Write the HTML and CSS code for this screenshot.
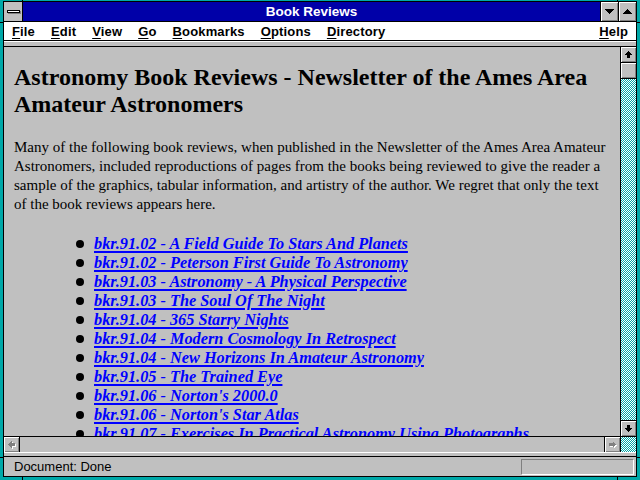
FILE: index.html
```html
<!DOCTYPE html>
<html>
<head>
<meta charset="utf-8">
<title>Book Reviews</title>
<link rel="stylesheet" href="styles.css">
</head>
<body>
<div class="window">
  <span class="notch nt1"></span><span class="notch nt2"></span>
  <span class="notch nb1"></span><span class="notch nb2"></span>
  <span class="notch nl1"></span><span class="notch nl2"></span>
  <span class="notch nr1"></span><span class="notch nr2"></span>
  <div class="inner">
    <div class="titlebar">
      <div class="sysbox"><span class="sysdash"></span></div>
      <div class="title">Book Reviews</div>
      <div class="tbtn">
        <svg width="9" height="6" viewBox="0 0 9 6" shape-rendering="crispEdges"><polygon points="0,0 9,0 4.5,5" fill="#000"/></svg>
      </div>
      <div class="tbtn last">
        <svg width="9" height="6" viewBox="0 0 9 6" shape-rendering="crispEdges"><polygon points="4.5,0 9,5 0,5" fill="#000"/></svg>
      </div>
    </div>
    <div class="menubar">
      <span class="mi"><u>F</u>ile</span>
      <span class="mi"><u>E</u>dit</span>
      <span class="mi"><u>V</u>iew</span>
      <span class="mi"><u>G</u>o</span>
      <span class="mi"><u>B</u>ookmarks</span>
      <span class="mi"><u>O</u>ptions</span>
      <span class="mi"><u>D</u>irectory</span>
      <span class="mi help"><u>H</u>elp</span>
    </div>
    <div class="sep"></div>
    <div class="main">
      <div class="content">
        <h1 class="head">Astronomy Book Reviews - Newsletter of the Ames Area Amateur Astronomers</h1>
        <p class="intro">Many of the following book reviews, when published in the Newsletter of the Ames Area Amateur Astronomers, included reproductions of pages from the books being reviewed to give the reader a sample of the graphics, tabular information, and artistry of the author. We regret that only the text of the book reviews appears here.</p>
        <ul class="links">
          <li><a href="#">bkr.91.02 - A Field Guide To Stars And Planets</a></li>
          <li><a href="#">bkr.91.02 - Peterson First Guide To Astronomy</a></li>
          <li><a href="#">bkr.91.03 - Astronomy - A Physical Perspective</a></li>
          <li><a href="#">bkr.91.03 - The Soul Of The Night</a></li>
          <li><a href="#">bkr.91.04 - 365 Starry Nights</a></li>
          <li><a href="#">bkr.91.04 - Modern Cosmology In Retrospect</a></li>
          <li><a href="#">bkr.91.04 - New Horizons In Amateur Astronomy</a></li>
          <li><a href="#">bkr.91.05 - The Trained Eye</a></li>
          <li><a href="#">bkr.91.06 - Norton's 2000.0</a></li>
          <li><a href="#">bkr.91.06 - Norton's Star Atlas</a></li>
          <li><a href="#">bkr.91.07 - Exercises In Practical Astronomy Using Photographs</a></li>
        </ul>
      </div>
      <div class="vscroll">
        <div class="sbtn vb">
          <svg width="9" height="9" viewBox="0 0 9 9" shape-rendering="crispEdges"><polygon points="4.5,1 8,5 6,5 6,8 3,8 3,5 1,5" fill="#000"/></svg>
        </div>
        <div class="thumb"></div>
        <div class="track"></div>
        <div class="sbtn vb down">
          <svg width="9" height="9" viewBox="0 0 9 9" shape-rendering="crispEdges"><polygon points="3,1 6,1 6,4 8,4 4.5,8 1,4 3,4" fill="#000"/></svg>
        </div>
      </div>
    </div>
    <div class="hscroll">
      <div class="sbtn hb">
        <svg width="11" height="9" viewBox="0 0 11 9" shape-rendering="crispEdges"><polygon points="2,4.5 5.5,1 5.5,3 9,3 9,6 5.5,6 5.5,8" fill="#fff" transform="translate(1,1)"/><polygon points="2,4.5 5.5,1 5.5,3 9,3 9,6 5.5,6 5.5,8" fill="#808080"/></svg>
      </div>
      <div class="htrack"></div>
      <div class="sbtn hb right">
        <svg width="11" height="9" viewBox="0 0 11 9" shape-rendering="crispEdges"><polygon points="9,4.5 5.5,1 5.5,3 2,3 2,6 5.5,6 5.5,8" fill="#fff" transform="translate(1,1)"/><polygon points="9,4.5 5.5,1 5.5,3 2,3 2,6 5.5,6 5.5,8" fill="#808080"/></svg>
      </div>
      <div class="corner"></div>
    </div>
    <div class="sep2"></div>
    <div class="status">
      <span class="stext">Document: Done</span>
      <span class="sfield"></span>
    </div>
  </div>
</div>
</body>
</html>
```

FILE: styles.css
```css
html, body {
  margin: 0;
  padding: 0;
  background: #00a8a8;
}
.window {
  position: relative;
  width: 640px;
  height: 480px;
  box-sizing: border-box;
  background: #00a8a8;
  padding: 1px 3px 3px 3px;
}
.notch {
  position: absolute;
  background: #000;
}
.nt1, .nt2 { top: 0; width: 1px; height: 1px; }
.nb1, .nb2 { bottom: 0; width: 1px; height: 3px; }
.nt1, .nb1 { left: 22px; }
.nt2, .nb2 { left: 617px; }
.nl1, .nl2, .nr1, .nr2 { height: 1px; width: 3px; }
.nl1, .nl2 { left: 0; }
.nr1, .nr2 { right: 0; }
.nl1, .nr1 { top: 22px; }
.nl2, .nr2 { top: 457px; }
.inner {
  box-sizing: border-box;
  height: 100%;
  border: 1px solid #000;
  background: #c0c0c0;
  display: flex;
  flex-direction: column;
}
.titlebar {
  height: 19px;
  flex: none;
  border-bottom: 1px solid #000;
  background: #0000a8;
  display: flex;
  align-items: stretch;
}
.sysbox {
  width: 18px;
  background: #c0c0c0;
  border-right: 1px solid #000;
  display: flex;
  align-items: center;
  justify-content: center;
}
.sysdash {
  width: 11px;
  height: 1px;
  background: #fff;
  border: 1px solid #000;
  box-shadow: 1px 1px 0 #808080;
}
.title {
  flex: 1;
  color: #fff;
  font: bold 13.5px "Liberation Sans", Arial, sans-serif;
  text-align: center;
  line-height: 19px;
}
.tbtn {
  width: 17px;
  background: #c0c0c0;
  border-left: 1px solid #000;
  box-shadow: inset 1px 1px 0 #fff, inset -1px -1px 0 #808080;
  display: flex;
  align-items: center;
  justify-content: center;
}
.tbtn svg { display: block; }
.menubar {
  height: 18px;
  flex: none;
  background: #fff;
  border-bottom: 1px solid #000;
  display: flex;
  align-items: center;
  padding-left: 8px;
  padding-right: 8px;
  gap: 16px;
  font: bold 13px "Liberation Sans", Arial, sans-serif;
  letter-spacing: 0.15px;
  color: #000;
}
.mi u { text-decoration-thickness: 1px; text-underline-offset: 2px; }
.help { margin-left: auto; }
.sep {
  flex: none;
  background: #c0c0c0;
  border-top: 1px solid #fff;
  border-bottom: 1px solid #000;
  box-sizing: border-box;
  height: 6px;
}
.main {
  flex: 1;
  display: flex;
  min-height: 0;
}
.content {
  flex: 1;
  overflow: hidden;
  padding: 0 10px;
  font-family: "Liberation Serif", "Times New Roman", serif;
  color: #000;
}
.head {
  font-size: 24px;
  font-weight: bold;
  line-height: 27px;
  margin: 17px 0 20px 0;
}
.intro {
  font-size: 15px;
  line-height: 19px;
  margin: 0 0 20px 0;
}
.links {
  list-style: none;
  margin: 0;
  padding: 0 0 0 62px;
}
.links li {
  display: flex;
  align-items: center;
  gap: 10px;
  height: 19px;
  white-space: nowrap;
}
.links li::before {
  content: "";
  width: 8px;
  height: 8px;
  border-radius: 50%;
  background: #000;
  flex: none;
}
.links a {
  color: #0000ff;
  font-size: 16.3px;
  font-weight: bold;
  font-style: italic;
  text-decoration: underline;
  text-decoration-thickness: 2px;
  text-underline-offset: 2px;
}
.vscroll {
  width: 15px;
  flex: none;
  border-left: 1px solid #000;
  display: flex;
  flex-direction: column;
}
.sbtn {
  background: #c0c0c0;
  box-shadow: inset 1px 1px 0 #fff, inset -1px -1px 0 #808080;
  display: flex;
  align-items: center;
  justify-content: center;
  box-sizing: border-box;
}
.sbtn svg { display: block; }
.vb {
  height: 16px;
  border-bottom: 1px solid #000;
}
.vb.down {
  border-bottom: none;
  border-top: 1px solid #000;
}
.thumb {
  height: 16px;
  background: #c0c0c0;
  border-bottom: 1px solid #000;
  box-shadow: inset 1px 1px 0 #fff, inset -1px -1px 0 #808080;
  box-sizing: border-box;
}
.track {
  flex: 1;
  background: repeating-conic-gradient(#00a8a8 0 25%, #ffffff 0 50%) 0 0 / 2px 2px;
}
.hscroll {
  height: 16px;
  flex: none;
  border-top: 1px solid #000;
  box-sizing: border-box;
  display: flex;
}
.hb {
  width: 16px;
  border-right: 1px solid #000;
}
.hb.right {
  border-right: none;
  border-left: 1px solid #000;
}
.htrack { flex: 1; background: #c0c0c0; }
.corner {
  width: 15px;
  border-left: 1px solid #000;
  background: repeating-conic-gradient(#00a8a8 0 25%, #ffffff 0 50%) 0 0 / 2px 2px;
}
.sep2 {
  height: 5px;
  flex: none;
  box-sizing: border-box;
  border-top: 1px solid #fff;
  border-bottom: 1px solid #000;
  background: #c0c0c0;
}
.status {
  height: 19px;
  flex: none;
  display: flex;
  align-items: center;
  padding: 0 2px 0 10px;
  font: 13px "Liberation Sans", Arial, sans-serif;
  color: #000;
}
.stext { flex: 1; }
.sfield {
  width: 113px;
  height: 16px;
  box-sizing: border-box;
  border-top: 1px solid #808080;
  border-left: 1px solid #808080;
  border-right: 1px solid #fff;
  border-bottom: 1px solid #fff;
}
```
